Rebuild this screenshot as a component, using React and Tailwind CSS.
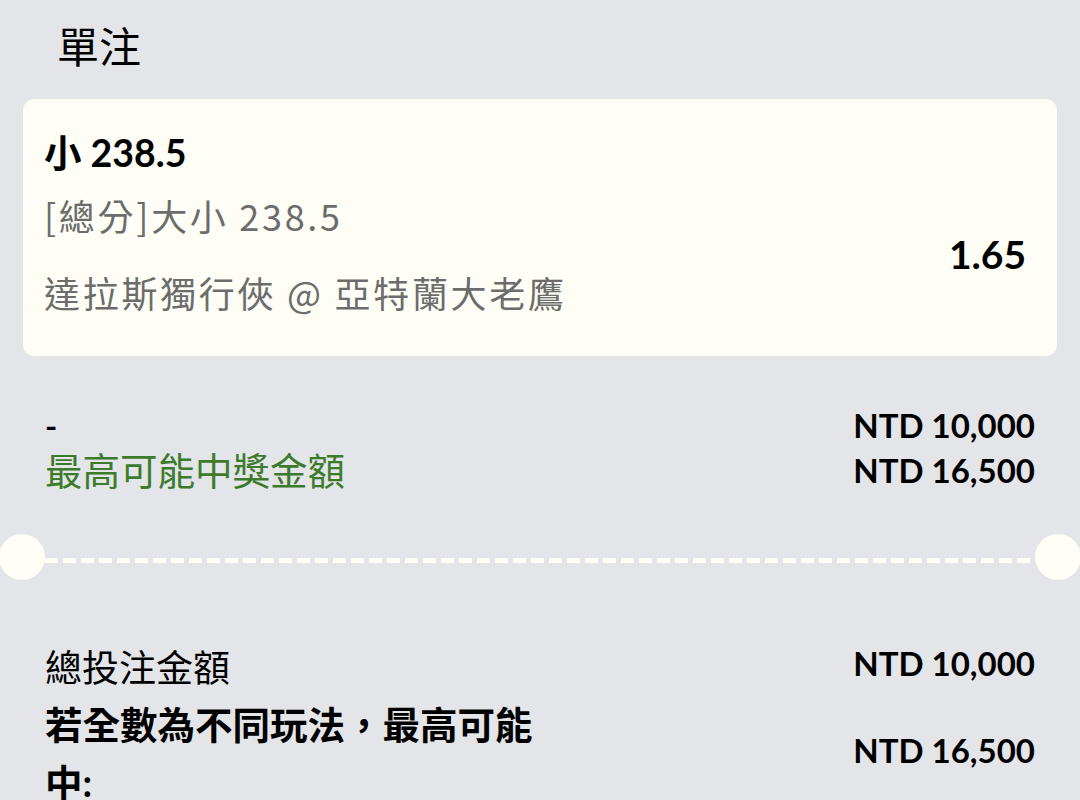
const sans = "font-['Lato','Noto_Sans_CJK_TC',sans-serif]"

const pick = {
  title: '小 238.5',
  market: '[總分]大小 238.5',
  match: '達拉斯獨行俠 @ 亞特蘭大老鷹',
  odds: '1.65',
}

function BetCard() {
  return (
    <div className="mx-[23px] mt-[24px] rounded-xl bg-[#fefef6] pl-[21px] pr-[31px] pt-[30px] pb-[25px]">
      <p className="text-[37.5px] leading-[48px] font-bold text-black">{pick.title}</p>
      <div className="flex items-center justify-between">
        <div className="font-['Noto_Sans_CJK_TC',sans-serif] text-[36px] leading-[77px] tracking-[2.7px] text-[#6c6c6b]">
          <p>{pick.market}</p>
          <p>{pick.match}</p>
        </div>
        <span className="text-[39px] leading-[48px] font-bold text-black">{pick.odds}</span>
      </div>
    </div>
  )
}

function Ticket() {
  return (
    <div className="mt-[42px] flex items-center">
      <div className="w-[46px] h-[46px] shrink-0 rounded-full bg-[#fefef6] -ml-[1px]" />
      <div className="flex-1 h-[5px] mt-[6px] bg-[repeating-linear-gradient(90deg,#fefef6_0_13px,transparent_13px_18px)]" />
      <div className="w-[46px] h-[46px] shrink-0 rounded-full bg-[#fefef6] -mr-[1px]" />
    </div>
  )
}

export default function App() {
  return (
    <div className={`h-screen overflow-hidden bg-[#e4e5e8] text-black ${sans}`}>
      <h1 className="pl-[57px] pt-[19px] text-[42px] leading-[56px] font-normal">單注</h1>

      <BetCard />

      {/* ── stake / max payout ─────────────────────────── */}
      <div className="px-[45px] mt-[48px]">
        <div className="flex justify-between text-[33px] leading-[43px] font-bold">
          <span>-</span>
          <span>NTD 10,000</span>
        </div>
        <div className="mt-[2px] flex justify-between leading-[43px]">
          <span className="text-[37.5px] text-[#3c7b2c]">最高可能中獎金額</span>
          <span className="text-[33px] font-bold">NTD 16,500</span>
        </div>
      </div>

      <Ticket />

      {/* ── totals ─────────────────────────────────────── */}
      <div className="px-[45px] mt-[62px]">
        <div className="flex justify-between items-start">
          <span className="pt-[4px] text-[37px] leading-[43px]">總投注金額</span>
          <span className="text-[33px] leading-[43px] font-bold">NTD 10,000</span>
        </div>
        <div className="mt-[7px] flex justify-between items-start">
          <p className="w-[500px] text-[37.5px] leading-[58px] font-bold">若全數為不同玩法，最高可能中:</p>
          <span className="mt-[33px] text-[33px] leading-[43px] font-bold">NTD 16,500</span>
        </div>
      </div>
    </div>
  )
}
